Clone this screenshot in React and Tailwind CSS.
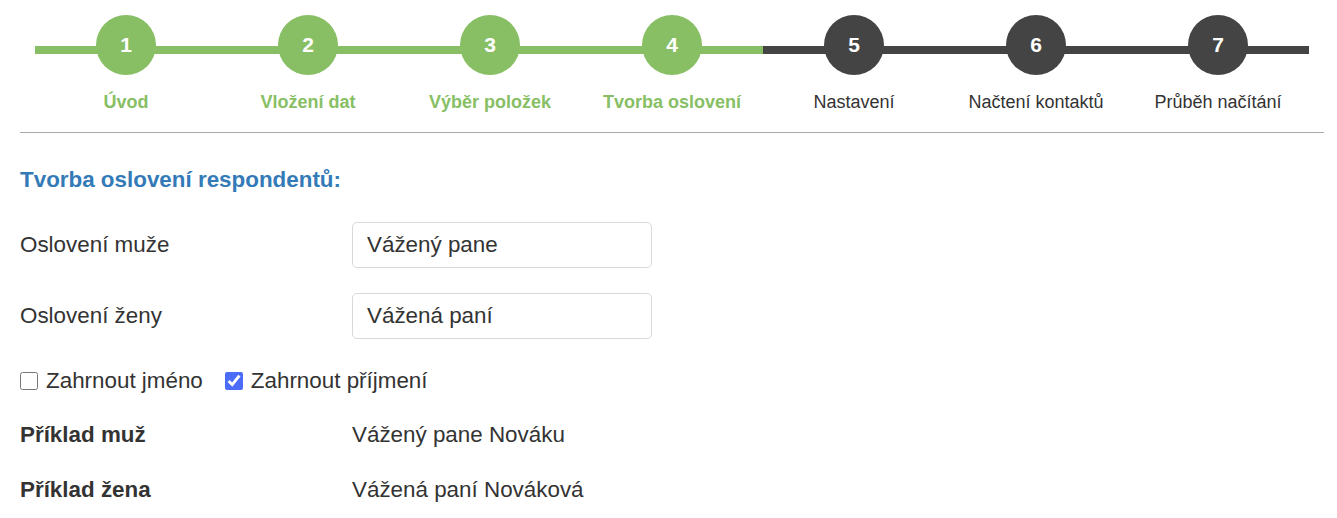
import React, { useState } from 'react'

const steps = [
  { n: 1, label: "Úvod" },
  { n: 2, label: "Vložení dat" },
  { n: 3, label: "Výběr položek" },
  { n: 4, label: "Tvorba oslovení" },
  { n: 5, label: "Nastavení" },
  { n: 6, label: "Načtení kontaktů" },
  { n: 7, label: "Průběh načítání" },
]

const current = 4

export default function App() {
  const [male, setMale] = useState("Vážený pane")
  const [female, setFemale] = useState("Vážená paní")
  const [firstName, setFirstName] = useState(false)
  const [lastName, setLastName] = useState(true)

  return (
    <div className="bg-white min-h-screen pl-[20px] pr-[13px] pt-[15px] text-[#333] font-['Liberation_Sans',Arial,sans-serif]">
      {/* stepper */}
      <div className="px-[15px] grid grid-cols-7">
        {steps.map((s) => {
          const done = s.n <= current
          return (
            <div key={s.n} className="relative flex flex-col items-center">
              <div className={done ? "absolute left-0 right-0 top-[31px] h-[8px] bg-[#88bf65]" : "absolute left-0 right-0 top-[31px] h-[8px] bg-[#444]"}></div>
              <div className={done ? "relative z-10 w-[60px] h-[60px] rounded-full bg-[#88bf65] text-white flex items-center justify-center text-[21px] font-bold" : "relative z-10 w-[60px] h-[60px] rounded-full bg-[#444] text-white flex items-center justify-center text-[21px] font-bold"}>
                {s.n}
              </div>
              <div className={done ? "mt-[16px] text-[18px] leading-[22px] font-bold text-[#88bf65]" : "mt-[16px] text-[18px] leading-[22px] text-[#333]"}>
                {s.label}
              </div>
            </div>
          )
        })}
      </div>
      <div className="mt-[19px] h-px bg-[#aaa]"></div>

      <h3 className="mt-[33px] text-[22.4px] leading-[28px] font-bold text-[#337ab7]">Tvorba oslovení respondentů:</h3>

      <div className="mt-[28px] flex items-center">
        <label className="w-[332px] text-[22.4px]">Oslovení muže</label>
        <input
          value={male}
          onChange={(e) => setMale(e.target.value)}
          className="w-[300px] h-[46px] border border-[#d9d9d9] rounded-[5px] px-[14px] text-[22.4px] text-[#333] outline-none"
        />
      </div>
      <div className="mt-[25px] flex items-center">
        <label className="w-[332px] text-[22.4px]">Oslovení ženy</label>
        <input
          value={female}
          onChange={(e) => setFemale(e.target.value)}
          className="w-[300px] h-[46px] border border-[#d9d9d9] rounded-[5px] px-[14px] text-[22.4px] text-[#333] outline-none"
        />
      </div>

      <div className="mt-[28px] flex items-center h-[28px] text-[22.4px]">
        <label className="flex items-center">
          <input type="checkbox" checked={firstName} onChange={(e) => setFirstName(e.target.checked)} className="w-[18px] h-[18px] m-0 accent-[#4a6cf7]" />
          <span className="ml-[8px]">Zahrnout jméno</span>
        </label>
        <label className="flex items-center ml-[22px]">
          <input type="checkbox" checked={lastName} onChange={(e) => setLastName(e.target.checked)} className="w-[18px] h-[18px] m-0 accent-[#4a6cf7]" />
          <span className="ml-[8px]">Zahrnout příjmení</span>
        </label>
      </div>

      <div className="mt-[26px] flex items-center h-[28px] text-[22.4px]">
        <div className="w-[332px] font-bold">Příklad muž</div>
        <div>{male}{lastName ? " Nováku" : ""}</div>
      </div>
      <div className="mt-[27px] flex items-center h-[28px] text-[22.4px]">
        <div className="w-[332px] font-bold">Příklad žena</div>
        <div>{female}{lastName ? " Nováková" : ""}</div>
      </div>
    </div>
  )
}
